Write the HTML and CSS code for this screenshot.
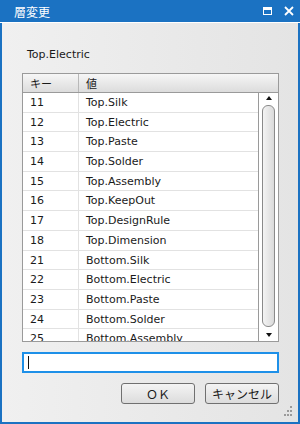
FILE: index.html
```html
<html>

<head>
    <link rel="stylesheet" href="styles.css">
    <title>層変更</title>
</head>

<body>
    <div class="window">
        <div id="title-bar">
            <div class="title">層変更</div>
            <div class="buttons">
                <div class="button maximize"><span class="box"></span></div>
                <div class="button close">
                    <svg width="10" height="10" viewBox="0 0 10 10">
                        <path d="M1 1L9 9M9 1L1 9" stroke="#fff" stroke-width="1.8" />
                    </svg>
                </div>
            </div>
        </div>
        <div class="content">
            <div class="current">Top.Electric</div>
            <div class="list">
                <div class="list-head">
                    <div class="col-key">キー</div>
                    <div class="col-val">値</div>
                </div>
                <div class="list-body">
                    <div class="rows">
                        <div class="row"><div class="col-key">11</div><div class="col-val">Top.Silk</div></div>
                        <div class="row"><div class="col-key">12</div><div class="col-val">Top.Electric</div></div>
                        <div class="row"><div class="col-key">13</div><div class="col-val">Top.Paste</div></div>
                        <div class="row"><div class="col-key">14</div><div class="col-val">Top.Solder</div></div>
                        <div class="row"><div class="col-key">15</div><div class="col-val">Top.Assembly</div></div>
                        <div class="row"><div class="col-key">16</div><div class="col-val">Top.KeepOut</div></div>
                        <div class="row"><div class="col-key">17</div><div class="col-val">Top.DesignRule</div></div>
                        <div class="row"><div class="col-key">18</div><div class="col-val">Top.Dimension</div></div>
                        <div class="row"><div class="col-key">21</div><div class="col-val">Bottom.Silk</div></div>
                        <div class="row"><div class="col-key">22</div><div class="col-val">Bottom.Electric</div></div>
                        <div class="row"><div class="col-key">23</div><div class="col-val">Bottom.Paste</div></div>
                        <div class="row"><div class="col-key">24</div><div class="col-val">Bottom.Solder</div></div>
                        <div class="row"><div class="col-key">25</div><div class="col-val">Bottom.Assembly</div></div>
                    </div>
                    <div class="scrollbar">
                        <div class="arrow up"></div>
                        <div class="thumb"></div>
                        <div class="arrow down"></div>
                    </div>
                </div>
            </div>
            <div class="input"><span class="caret"></span></div>
            <div class="actions">
                <div class="btn">ＯＫ</div>
                <div class="btn">キャンセル</div>
            </div>
            <div class="grip">
                <svg width="8" height="11" viewBox="0 0 8 11">
                    <rect x="6" y="0" width="2" height="2" fill="#9a9a9a" />
                    <rect x="3" y="4" width="2" height="2" fill="#9a9a9a" />
                    <rect x="6" y="4" width="2" height="2" fill="#9a9a9a" />
                    <rect x="0" y="8" width="2" height="2" fill="#9a9a9a" />
                    <rect x="3" y="8" width="2" height="2" fill="#9a9a9a" />
                    <rect x="6" y="8" width="2" height="2" fill="#9a9a9a" />
                </svg>
            </div>
        </div>
    </div>
</body>

</html>
```

FILE: styles.css
```css
body {
    margin: 0;
    padding: 0;
    overflow: hidden;
    font-family: "DejaVu Sans", "Noto Sans CJK JP", sans-serif;
    font-size: 11px;
    color: #1a1a1a;
}

.window {
    width: 300px;
    height: 424px;
    box-sizing: border-box;
    border: 2px solid #1b72c2;
    border-top: none;
    display: flex;
    flex-direction: column;
    background: linear-gradient(to right, #f0f0f0, #e4e4e4);
}

#title-bar {
    height: 22px;
    margin: 0 -2px;
    background-color: #1b72c2;
    border-bottom: 1px solid #fff;
    color: #fff;
    display: flex;
    align-items: center;
    justify-content: space-between;
    padding: 0 5px 0 14px;
}

#title-bar .title {
    font-family: "Noto Sans CJK JP", sans-serif;
    font-size: 12px;
}

#title-bar .buttons {
    display: flex;
    gap: 10px;
    align-items: center;
}

#title-bar .button {
    width: 12px;
    height: 14px;
    display: flex;
    align-items: center;
    justify-content: center;
}

#title-bar .box {
    width: 7px;
    height: 4px;
    border: 1.5px solid #fff;
    border-top-width: 3px;
}

.content {
    flex: 1;
    position: relative;
    padding: 24px 19px 0 20px;
}

.current {
    height: 16px;
    line-height: 16px;
    padding-left: 5px;
    margin-bottom: 10px;
}

.list {
    border: 1px solid #9a9a9a;
    height: 267px;
    display: flex;
    flex-direction: column;
    background: #fff;
}

.list-head {
    display: flex;
    height: 18px;
    line-height: 18px;
    border-bottom: 1px solid #9a9a9a;
    background: linear-gradient(#f6f6f6, #dcdcdc);
}

.list-head .col-key {
    border-right: 1px solid #b8b8b8;
    font-family: "Noto Sans CJK JP", sans-serif;
}

.list-head .col-val {
    font-family: "Noto Sans CJK JP", sans-serif;
}

.col-key {
    width: 56px;
    padding-left: 7px;
    box-sizing: border-box;
}

.col-val {
    padding-left: 7px;
}

.list-body {
    flex: 1;
    display: flex;
    overflow: hidden;
}

.rows {
    flex: 1;
    overflow: hidden;
}

.row {
    display: flex;
    height: 19.7px;
    line-height: 19px;
    box-sizing: border-box;
    border-bottom: 1px solid #e2e2e2;
}

.row .col-key {
    border-right: 1px solid #e2e2e2;
}

.scrollbar {
    width: 19px;
    border-left: 1px solid #9a9a9a;
    background: #fff;
    display: flex;
    flex-direction: column;
    align-items: center;
}

.arrow {
    width: 0;
    height: 0;
    border-left: 3.5px solid transparent;
    border-right: 3.5px solid transparent;
}

.arrow.up {
    margin-top: 3px;
    border-bottom: 4px solid #111;
}

.arrow.down {
    margin-bottom: 4px;
    border-top: 4px solid #111;
}

.thumb {
    flex: 1;
    width: 13px;
    margin: 5px 0 6px;
    box-sizing: border-box;
    border: 1px solid #8a8a8a;
    border-radius: 6px;
    background: linear-gradient(to right, #f4f4f4, #dadada);
}

.input {
    margin-top: 10px;
    height: 21px;
    box-sizing: border-box;
    border: 2px solid #1e90e8;
    background: #fff;
    display: flex;
    align-items: center;
    padding-left: 4px;
}

.caret {
    width: 1px;
    height: 13px;
    background: #111;
}

.actions {
    display: flex;
    justify-content: flex-end;
    gap: 10px;
    margin-top: 10px;
}

.btn {
    width: 74px;
    height: 21px;
    line-height: 19px;
    box-sizing: border-box;
    border: 1px solid #707070;
    border-radius: 3px;
    background: linear-gradient(#f4f4f4, #dcdcdc);
    text-align: center;
    font-family: "Noto Sans CJK JP", sans-serif;
    font-size: 12px;
}

.grip {
    position: absolute;
    right: 6px;
    bottom: 5px;
    line-height: 0;
}
```
